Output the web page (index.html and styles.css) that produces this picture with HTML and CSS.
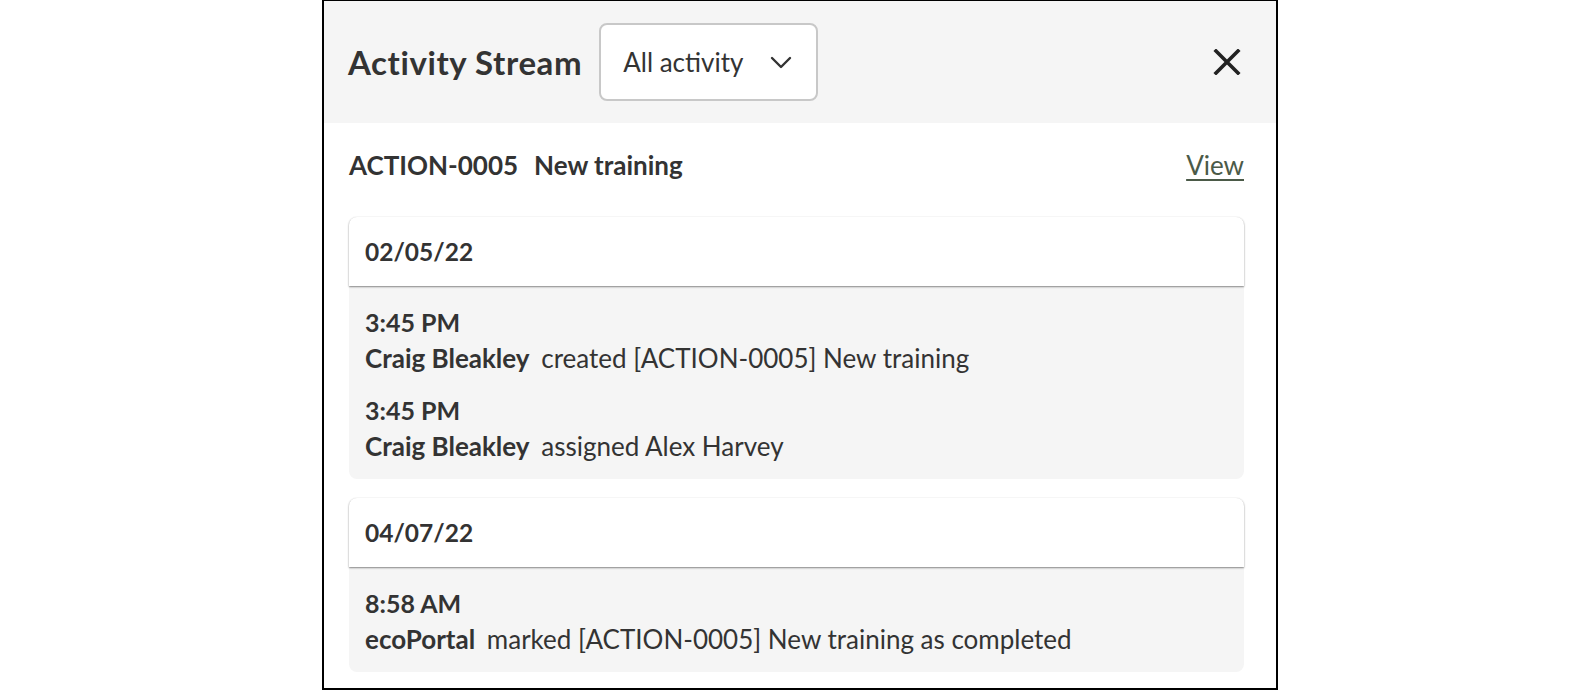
FILE: index.html
```html
<!DOCTYPE html>
<html lang="en">
<head>
<meta charset="utf-8">
<title>Activity Stream</title>
<link rel="stylesheet" href="styles.css">
</head>
<body>
<div class="panel">
  <header class="panel-header">
    <h1 class="title">Activity Stream</h1>
    <div class="select">
      <span class="select-label">All activity</span>
      <svg class="chevron" width="22" height="13" viewBox="0 0 22 13"><path d="M2 2 L11 11 L20 2" fill="none" stroke="#333" stroke-width="2.4" stroke-linecap="round" stroke-linejoin="round"/></svg>
    </div>
    <svg class="close" width="28" height="26" viewBox="0 0 28 26"><path d="M3 2 L25 24 M25 2 L3 24" stroke="#222" stroke-width="3.6" stroke-linecap="square"/></svg>
  </header>
  <main class="content">
    <div class="record">
      <div class="record-name"><span class="record-id">ACTION-0005</span><span>New training</span></div>
      <a class="view-link" href="#">View</a>
    </div>

    <section class="day">
      <div class="day-header">02/05/22</div>
      <div class="day-body">
        <div class="entry">
          <div class="time">3:45 PM</div>
          <div class="text"><span class="actor">Craig Bleakley</span> created [ACTION-0005] New training</div>
        </div>
        <div class="entry">
          <div class="time">3:45 PM</div>
          <div class="text"><span class="actor">Craig Bleakley</span> assigned Alex Harvey</div>
        </div>
      </div>
    </section>

    <section class="day">
      <div class="day-header">04/07/22</div>
      <div class="day-body">
        <div class="entry">
          <div class="time">8:58 AM</div>
          <div class="text"><span class="actor">ecoPortal</span> marked [ACTION-0005] New training as completed</div>
        </div>
      </div>
    </section>
  </main>
</div>
</body>
</html>
```
FILE: styles.css
```css
* { box-sizing: border-box; }
html, body { margin: 0; padding: 0; background: #fff; }
body {
  font-family: "Lato", "Liberation Sans", sans-serif;
  color: #333;
}
.panel {
  width: 956px;
  height: 690px;
  margin-left: 322px;
  border: 2px solid #000;
  border-top-width: 1px;
  background: #fff;
  overflow: hidden;
}
.panel-header {
  height: 122px;
  background: #f5f5f5;
  display: flex;
  align-items: center;
  padding: 0 35px 0 24px;
}
.title {
  margin: 0;
  font-size: 33px;
  letter-spacing: 0.6px;
  font-weight: 700;
  color: #333;
}
.select {
  margin-left: 17px;
  width: 219px;
  height: 78px;
  border: 2px solid #c8c8c8;
  border-radius: 8px;
  background: #fff;
  display: flex;
  align-items: center;
  justify-content: space-between;
  padding: 0 24px 0 22px;
  font-size: 26px;
  color: #333;
}
.chevron { display: block; }
.close { margin-left: auto; display: block; }
.content {
  padding: 0 32px 0 25px;
}
.record {
  display: flex;
  justify-content: space-between;
  align-items: baseline;
  padding-top: 24px;
  line-height: 36px;
  font-size: 26px;
}
.record-name { font-weight: 700; }
.record-id { margin-right: 16px; }
.view-link {
  color: #4b5a48;
  text-decoration: underline;
  text-decoration-thickness: 2px;
  text-underline-offset: 4px;
}
.day {
  margin-top: 34px;
  border-radius: 8px;
  background: #f5f5f5;
}
.day + .day { margin-top: 19px; }
.day-header {
  height: 69px;
  line-height: 69px;
  background: #fff;
  border-radius: 8px 8px 0 0;
  padding: 0 16px;
  font-size: 24.5px;
  font-weight: 700;
  box-shadow: 0 1px 2px rgba(0,0,0,0.45), 0 0 2px rgba(0,0,0,0.06);
  position: relative;
}
.day-body {
  padding: 18px 16px 15px 16px;
  font-size: 26px;
  line-height: 36px;
}
.entry + .entry { margin-top: 16px; }
.time { font-weight: 700; font-size: 25px; }
.actor { font-weight: 700; margin-right: 5px; }
```
